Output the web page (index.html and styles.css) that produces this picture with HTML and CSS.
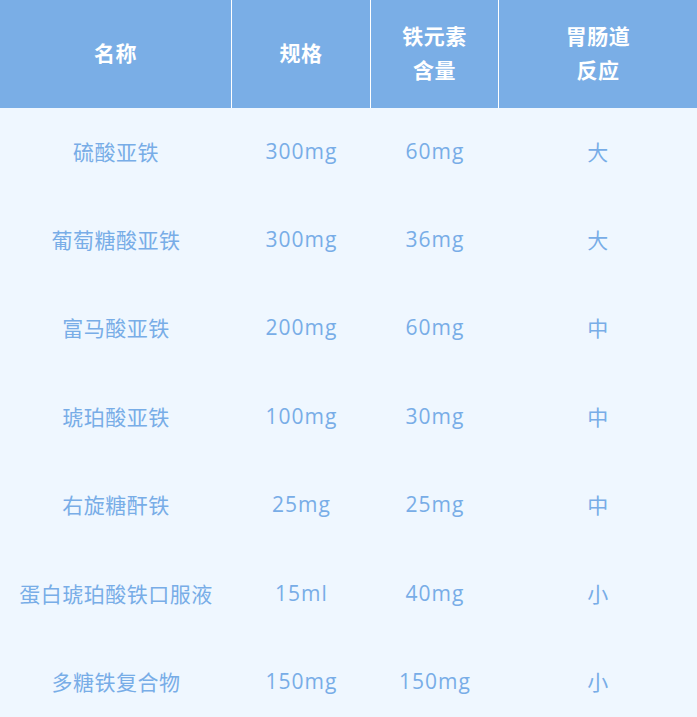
FILE: index.html
```html
<!DOCTYPE html>
<html lang="zh">
<head>
<meta charset="utf-8">
<link rel="stylesheet" href="styles.css">
</head>
<body>
<div class="table">
  <div class="th">名称</div>
  <div class="th">规格</div>
  <div class="th">铁元素<br>含量</div>
  <div class="th last">胃肠道<br>反应</div>

  <div class="td">硫酸亚铁</div><div class="td num">300mg</div><div class="td num">60mg</div><div class="td">大</div>
  <div class="td">葡萄糖酸亚铁</div><div class="td num">300mg</div><div class="td num">36mg</div><div class="td">大</div>
  <div class="td">富马酸亚铁</div><div class="td num">200mg</div><div class="td num">60mg</div><div class="td">中</div>
  <div class="td">琥珀酸亚铁</div><div class="td num">100mg</div><div class="td num">30mg</div><div class="td">中</div>
  <div class="td">右旋糖酐铁</div><div class="td num">25mg</div><div class="td num">25mg</div><div class="td">中</div>
  <div class="td">蛋白琥珀酸铁口服液</div><div class="td num">15ml</div><div class="td num">40mg</div><div class="td">小</div>
  <div class="td">多糖铁复合物</div><div class="td num">150mg</div><div class="td num">150mg</div><div class="td">小</div>
</div>
</body>
</html>
```
FILE: styles.css
```css
html, body {
  margin: 0;
  padding: 0;
  background: #eff7ff;
}
.table {
  display: grid;
  grid-template-columns: 232px 139px 128px 198px;
  grid-template-rows: 108px;
  grid-auto-rows: 88.4px;
  font-family: "Noto Sans CJK SC", "Open Sans", sans-serif;
  font-size: 21px;
  letter-spacing: 0.5px;
}
.th {
  background: #7aaee6;
  color: #ffffff;
  font-weight: bold;
  display: flex;
  align-items: center;
  justify-content: center;
  text-align: center;
  line-height: 34px;
  padding-bottom: 4px;
  border-right: 1px solid #ffffff;
}
.th.last {
  border-right: none;
}
.td {
  color: #78ade7;
  display: flex;
  align-items: center;
  justify-content: center;
  text-align: center;
  padding-bottom: 3px;
}
.num {
  font-family: "Open Sans", "Noto Sans CJK SC", sans-serif;
  letter-spacing: 1px;
}
```
